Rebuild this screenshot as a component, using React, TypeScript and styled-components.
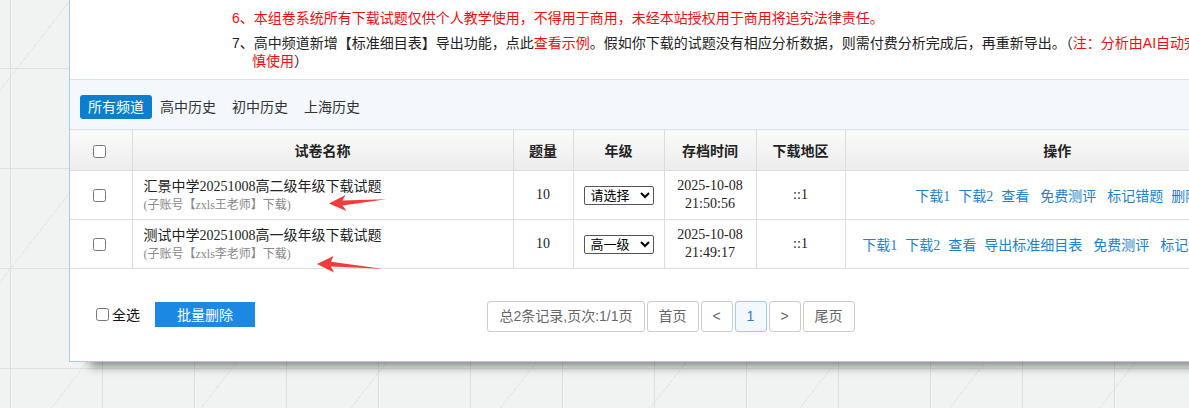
import React from 'react';
import styled, { createGlobalStyle } from 'styled-components';

const SANS = '"Liberation Sans", "Noto Sans CJK SC", sans-serif';
const MIXED = '"Liberation Serif", "Noto Sans CJK SC", serif';

const GlobalStyle = createGlobalStyle`
  html, body {
    margin: 0;
    padding: 0;
  }
  body {
    width: 1189px;
    height: 408px;
    overflow: hidden;
    font-family: ${SANS};
    background-color: #f1f2f2;
    background-image:
      repeating-linear-gradient(90deg, transparent 0 10px, #dedfdf 10px 11px, transparent 11px 92px),
      repeating-linear-gradient(180deg, transparent 0 68px, #dedfdf 68px 69px, transparent 69px 100px),
      repeating-linear-gradient(-52deg, transparent 0 70px, #e6e7e7 70px 71px, transparent 71px 118px);
  }
`;

const papers = [
  {
    id: 1,
    title: '汇景中学20251008高二级年级下载试题',
    sub: '(子账号【zxls王老师】下载)',
    count: 10,
    grade: '请选择',
    date: '2025-10-08',
    time: '21:50:56',
    area: '::1',
    ops: ['下载1', '下载2', '查看', '免费测评', '标记错题', '删除'],
  },
  {
    id: 2,
    title: '测试中学20251008高一级年级下载试题',
    sub: '(子账号【zxls李老师】下载)',
    count: 10,
    grade: '高一级',
    date: '2025-10-08',
    time: '21:49:17',
    area: '::1',
    ops: ['下载1', '下载2', '查看', '导出标准细目表', '免费测评', '标记错题', '删除'],
  },
];

const grades = ['请选择', '高一级', '高二级', '高三级'];
const tabs = ['所有频道', '高中历史', '初中历史', '上海历史'];

function Notice() {
  return (
    <NoticeList>
      <NoticeItem red>6、本组卷系统所有下载试题仅供个人教学使用，不得用于商用，未经本站授权用于商用将追究法律责任。</NoticeItem>
      <NoticeItem>
        7、高中频道新增【标准细目表】导出功能，点此<RedText>查看示例</RedText>。假如你下载的试题没有相应分析数据，则需付费分析完成后，再重新导出。（<RedText>注：分析由AI自动完成，结果仅供参考，请谨</RedText>
        <br />
        <RedText>慎使用</RedText>）
      </NoticeItem>
    </NoticeList>
  );
}

function Tabs() {
  return (
    <TabBar>
      {tabs.map((t, i) => (
        <Tab key={t} active={i === 0}>{t}</Tab>
      ))}
    </TabBar>
  );
}

function Arrows() {
  // 截图上的红色标注箭头
  return (
    <ArrowLayer width="1189" height="408" viewBox="0 0 1189 408">
      <polygon points="329,203.5 345.5,195 342.5,200.6 386,199.2 342.5,205.6 346.5,211" fill="#f23b3b" />
      <polygon points="317,264 333.5,256 331,261.8 382,268.8 331,266.6 334,272.5" fill="#f23b3b" />
    </ArrowLayer>
  );
}

function PaperRow({ paper }) {
  return (
    <tr>
      <Td><Check type="checkbox" /></Td>
      <NameTd>
        <PaperTitle>{paper.title}</PaperTitle>
        <PaperSub>{paper.sub}</PaperSub>
      </NameTd>
      <Td>{paper.count}</Td>
      <Td>
        <GradeSelect defaultValue={paper.grade}>
          {grades.map((g) => <option key={g}>{g}</option>)}
        </GradeSelect>
      </Td>
      <Td>
        <DateLine>{paper.date}</DateLine>
        <DateLine>{paper.time}</DateLine>
      </Td>
      <Td>{paper.area}</Td>
      <Td>
        <OpsBox>
          {paper.ops.map((op) => (
            <OpLink key={op} href="#" spaced={op === '免费测评'}>{op}</OpLink>
          ))}
        </OpsBox>
      </Td>
    </tr>
  );
}

function Footer() {
  return (
    <FooterBar>
      <BulkBox>
        <CheckLabel>
          <Check type="checkbox" />全选
        </CheckLabel>
        <BlueButton>批量删除</BlueButton>
      </BulkBox>
      <Pager>
        <PageItem>总2条记录,页次:1/1页</PageItem>
        <PageItem>首页</PageItem>
        <PageItem narrow>&lt;</PageItem>
        <PageItem narrow current>1</PageItem>
        <PageItem narrow>&gt;</PageItem>
        <PageItem>尾页</PageItem>
      </Pager>
      <div />
    </FooterBar>
  );
}

export default function App() {
  return (
    <Page>
      <GlobalStyle />
      <Panel>
        <Notice />
        <Tabs />
        <Table>
          <colgroup>
            <col style={{ width: 62 }} />
            <col style={{ width: 381 }} />
            <col style={{ width: 60 }} />
            <col style={{ width: 91 }} />
            <col style={{ width: 92 }} />
            <col style={{ width: 89 }} />
            <col />
          </colgroup>
          <thead>
            <tr>
              <Th><Check type="checkbox" /></Th>
              <Th>试卷名称</Th>
              <Th>题量</Th>
              <Th>年级</Th>
              <Th>存档时间</Th>
              <Th>下载地区</Th>
              <Th>操作</Th>
            </tr>
          </thead>
          <tbody>
            {papers.map((p) => <PaperRow key={p.id} paper={p} />)}
          </tbody>
        </Table>
        <Footer />
      </Panel>
      <Arrows />
    </Page>
  );
}

const Page = styled.div`
  position: relative;
  width: 1189px;
  height: 408px;
  padding-left: 69px;
  box-sizing: border-box;
`;

const Panel = styled.div`
  width: 1202px;
  background: #fff;
  border: 1px solid #a9cde4;
  border-top: none;
  box-shadow: 18px 8px 9px -3px rgba(0, 0, 0, 0.42);
`;

const NoticeList = styled.ul`
  list-style: none;
  margin: 0;
  padding: 9px 0 9px 162px;
  font-size: 14px;
  line-height: 18px;
  color: #222;
`;

const NoticeItem = styled.li`
  padding-left: 20px;
  text-indent: -20px;
  white-space: nowrap;
  margin-bottom: 7px;
  color: ${(props) => (props.red ? '#f20d0d' : '#222')};
  &:last-child {
    margin-bottom: 0;
  }
`;

const RedText = styled.span`
  color: #f20d0d;
`;

const TabBar = styled.div`
  display: flex;
  height: 50px;
  box-sizing: border-box;
  padding: 15px 0 0 10px;
  background: #f4f7fb;
  border-top: 1px solid #d3e3f0;
`;

const Tab = styled.span`
  height: 24px;
  line-height: 24px;
  padding: 0 8px;
  font-size: 14px;
  border-radius: 3px;
  color: ${(props) => (props.active ? '#fff' : '#333')};
  background: ${(props) => (props.active ? '#0b7fce' : 'transparent')};
`;

const Table = styled.table`
  width: 1200px;
  border-collapse: collapse;
  table-layout: fixed;
  font-family: ${MIXED};
  font-size: 14px;
  color: #222;
  border-top: 1px solid #dde3e8;
`;

const Th = styled.th`
  height: 40px;
  padding: 0;
  border: 1px solid #dcdcdc;
  border-top: none;
  background: linear-gradient(#fbfbfb, #ececec);
  font-family: ${SANS};
  font-size: 14px;
  font-weight: bold;
  color: #222;
  text-align: center;
  &:first-child {
    border-left: none;
  }
`;

const Td = styled.td`
  height: 48px;
  padding: 0;
  border: 1px solid #dcdcdc;
  text-align: center;
  vertical-align: middle;
  &:first-child {
    border-left: none;
  }
`;

const NameTd = styled(Td)`
  text-align: left;
  padding-left: 11px;
`;

const PaperTitle = styled.div`
  font-size: 14px;
  line-height: 19px;
  color: #222;
`;

const PaperSub = styled.div`
  font-size: 12px;
  line-height: 18px;
  color: #888;
`;

const DateLine = styled.div`
  line-height: 18px;
`;

const Check = styled.input`
  width: 13px;
  height: 13px;
  margin: 0 3px 0 0;
  vertical-align: middle;
`;

const GradeSelect = styled.select`
  width: 70px;
  height: 19px;
  font-family: ${SANS};
  font-size: 13px;
  color: #000;
  border: 1px solid #555;
  border-radius: 2px;
  padding: 0 0 0 2px;
  background: #fff;
`;

const OpsBox = styled.div`
  display: flex;
  justify-content: center;
  gap: 8px;
`;

const OpLink = styled.a`
  color: #1d82cc;
  text-decoration: none;
  white-space: nowrap;
  margin: 0 ${(props) => (props.spaced ? '3px' : '0')};
`;

const FooterBar = styled.div`
  display: grid;
  grid-template-columns: 1fr auto 1fr;
  align-items: center;
  height: 92px;
  padding-bottom: 2px;
  box-sizing: border-box;
`;

const BulkBox = styled.div`
  display: flex;
  align-items: center;
  padding-left: 26px;
`;

const CheckLabel = styled.label`
  display: flex;
  align-items: center;
  font-size: 14px;
  color: #111;
  margin-right: 15px;
`;

const BlueButton = styled.button`
  width: 100px;
  height: 25px;
  border: none;
  background: #1b89e3;
  color: #fff;
  font-family: ${SANS};
  font-size: 14px;
  padding: 0;
`;

const Pager = styled.div`
  display: flex;
  gap: 2px;
  margin-top: 5px;
`;

const PageItem = styled.span`
  height: 29px;
  line-height: 29px;
  min-width: ${(props) => (props.narrow ? '30px' : 'auto')};
  padding: ${(props) => (props.narrow ? '0' : '0 11px')};
  text-align: center;
  font-size: 14px;
  color: ${(props) => (props.current ? '#1d82cc' : '#666')};
  background: ${(props) => (props.current ? '#f3f8fc' : '#fff')};
  border: 1px solid ${(props) => (props.current ? '#9ccbec' : '#ccc')};
  border-radius: 3px;
`;

const ArrowLayer = styled.svg`
  position: absolute;
  top: 0;
  left: 0;
  pointer-events: none;
`;
